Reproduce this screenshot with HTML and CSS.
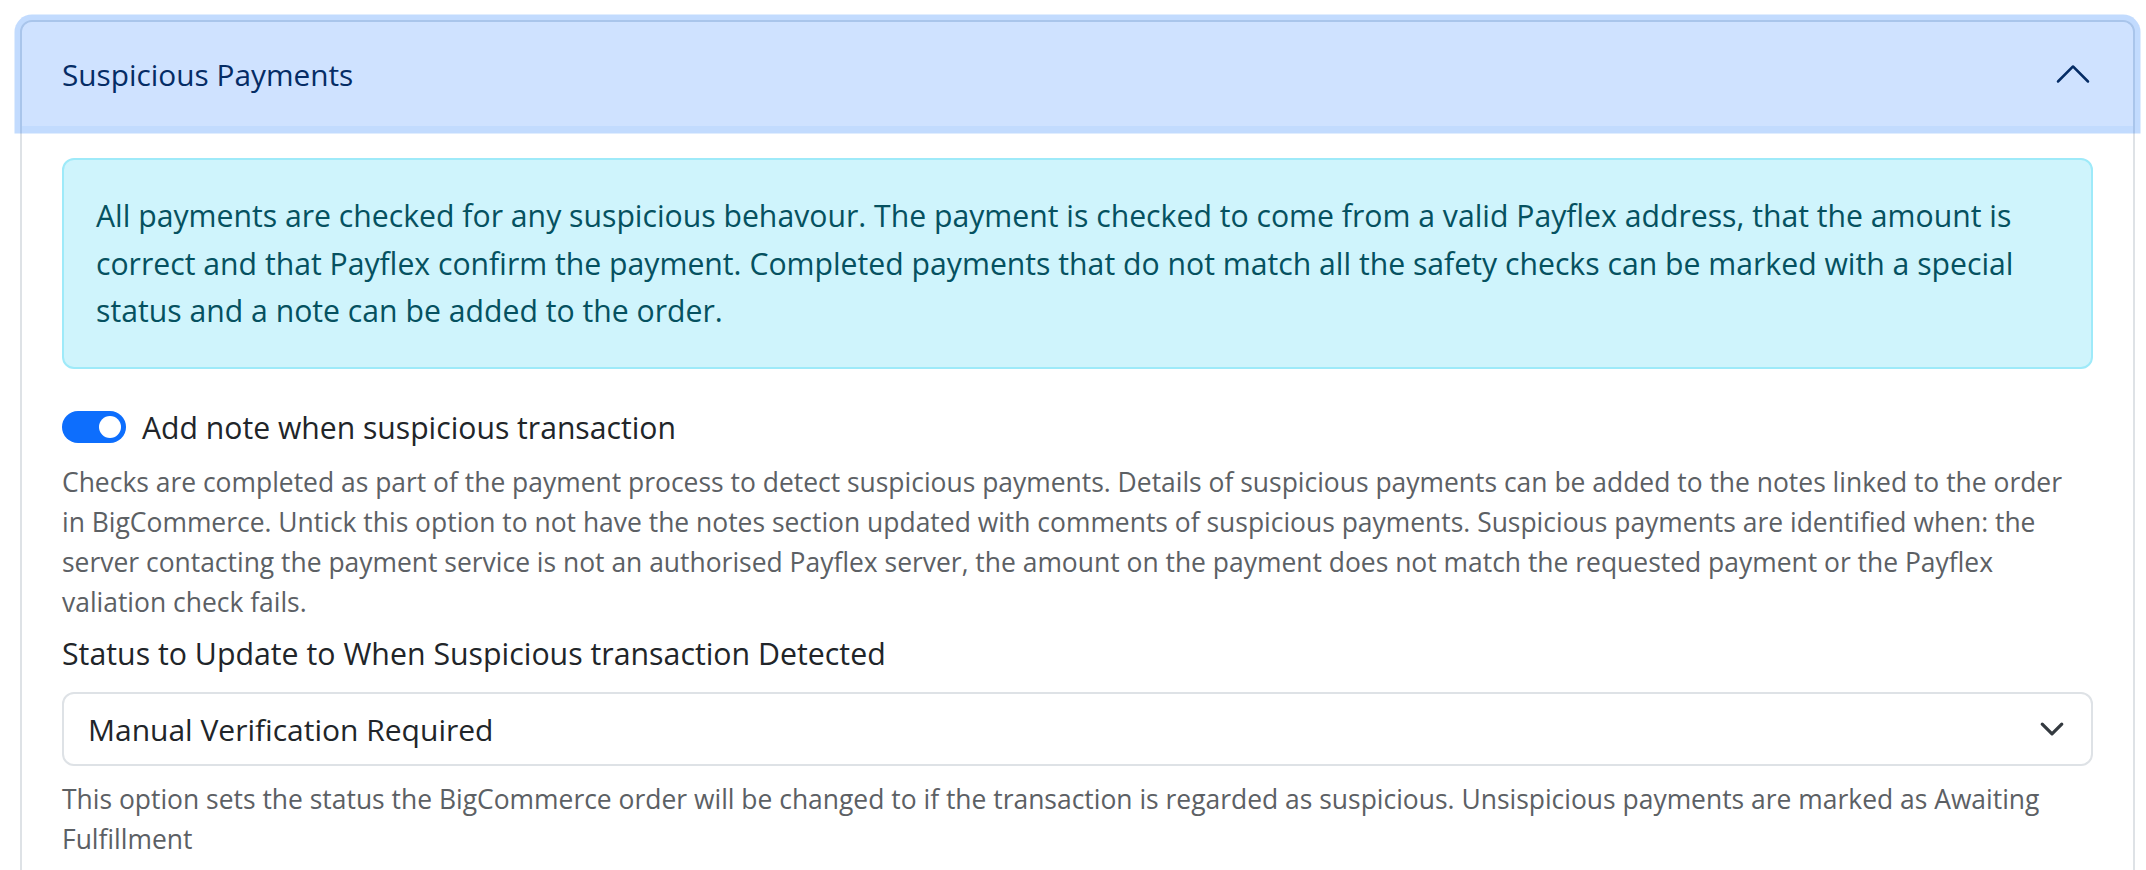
FILE: index.html
```html
<!DOCTYPE html>
<html lang="en">
<head>
<meta charset="utf-8">
<title>Suspicious Payments</title>
<link rel="stylesheet" href="styles.css">
</head>
<body>
<div class="page">
  <section class="accordion-item">
    <div class="accordion-header">
      <span class="accordion-title">Suspicious Payments</span>
      <svg class="accordion-icon" viewBox="0 0 16 16" width="40" height="40" aria-hidden="true">
        <path fill="#052c65" d="M1.646 4.646a.5.5 0 0 1 .708 0L8 10.293l5.646-5.647a.5.5 0 0 1 .708.708l-6 6a.5.5 0 0 1-.708 0l-6-6a.5.5 0 0 1 0-.708z"/>
      </svg>
    </div>
    <div class="accordion-body">
      <div class="alert">All payments are checked for any suspicious behavour. The payment is checked to come from a valid Payflex address, that the amount is<br>correct and that Payflex confirm the payment. Completed payments that do not match all the safety checks can be marked with a special<br>status and a note can be added to the order.</div>

      <div class="form-check">
        <span class="switch" role="switch" aria-checked="true"></span>
        <span class="check-label">Add note when suspicious transaction</span>
      </div>
      <div class="form-text">Checks are completed as part of the payment process to detect suspicious payments. Details of suspicious payments can be added to the notes linked to the order<br>in BigCommerce. Untick this option to not have the notes section updated with comments of suspicious payments. Suspicious payments are identified when: the<br>server contacting the payment service is not an authorised Payflex server, the amount on the payment does not match the requested payment or the Payflex<br>valiation check fails.</div>

      <div class="form-label">Status to Update to When Suspicious transaction Detected</div>
      <div class="form-select">
        <span class="select-value">Manual Verification Required</span>
        <svg class="select-arrow" viewBox="0 0 16 16" width="26" height="26" aria-hidden="true">
          <path fill="none" stroke="#343a40" stroke-linecap="round" stroke-linejoin="round" stroke-width="2" d="m2 5 6 6 6-6"/>
        </svg>
      </div>
      <div class="form-text form-text-select">This option sets the status the BigCommerce order will be changed to if the transaction is regarded as suspicious. Unsispicious payments are marked as Awaiting<br>Fulfillment</div>
    </div>
  </section>
</div>
</body>
</html>
```
FILE: styles.css
```css
* { box-sizing: border-box; }

html, body {
  margin: 0;
  background: #ffffff;
}

body {
  font-family: "Open Sans", "Noto Sans", sans-serif;
  font-size: 30px;
  line-height: 45px;
  color: #212529;
}

.page {
  padding: 20px 11px 0 20px;
}

.accordion-item {
  border: 2px solid #dee2e6;
  border-radius: 12px;
  background: #ffffff;
}

.accordion-header {
  position: relative;
  z-index: 2;
  display: flex;
  align-items: center;
  justify-content: space-between;
  padding: 29.5px 40px;
  background: #cfe2ff;
  color: #052c65;
  border-radius: 10px 10px 0 0;
  box-shadow: 0 0 0 7.5px rgba(13, 110, 253, 0.25);
}

.accordion-title {
  font-size: 29.8px;
  line-height: 45px;
}

.accordion-icon {
  flex: none;
  transform: rotate(180deg);
}

.accordion-body {
  padding: 32px 40px 32px 40px;
}

.alert {
  background: #cff4fc;
  border: 2px solid #9eeaf9;
  border-radius: 12px;
  color: #055160;
  padding: 32px;
  font-size: 30.2px;
  line-height: 47.5px;
  margin-bottom: 36.5px;
}

.form-check {
  display: flex;
  align-items: flex-start;
  min-height: 48px;
}

.switch {
  position: relative;
  flex: none;
  width: 64px;
  height: 32px;
  margin-top: 5.7px;
  margin-right: 16px;
  border-radius: 16px;
  background: #0d6efd;
}

.switch::after {
  content: "";
  position: absolute;
  top: 5px;
  right: 5px;
  width: 22px;
  height: 22px;
  border-radius: 50%;
  background: #ffffff;
}

.check-label {
  font-size: 30.15px;
  line-height: 45px;
}

.form-text {
  margin-top: 8.5px;
  font-size: 26.45px;
  line-height: 40px;
  color: #5c6064;
}

.form-label {
  margin-top: 9px;
  margin-bottom: 16.5px;
  font-size: 30.3px;
  line-height: 45px;
}

.form-select {
  display: flex;
  align-items: center;
  justify-content: space-between;
  border: 2px solid #dee2e6;
  border-radius: 12px;
  padding: 12.5px 26px 12.5px 24px;
  background: #ffffff;
}

.select-value {
  font-size: 30px;
  line-height: 45px;
}

.select-arrow {
  flex: none;
}

.form-text-select {
  margin-top: 12.5px;
}
```
